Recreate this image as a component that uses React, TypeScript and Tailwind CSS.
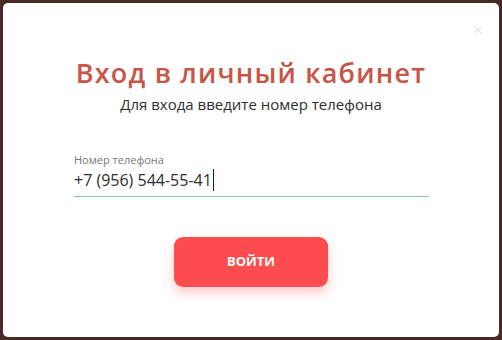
import { X } from "lucide-react";

export default function App() {
  return (
    <div className="w-[502px] h-[340px] bg-[#4a2a24] p-[3px] font-['Open_Sans',sans-serif]">
      <div className="relative h-full bg-white rounded-[5px] flex flex-col items-center">
        <button className="absolute top-[20px] right-[14px] text-[#d4d4d4]">
          <X size={14} strokeWidth={1.5} />
        </button>

        <h1 className="mt-[54px] text-[27px] leading-[32px] font-semibold text-[#c75548] tracking-[1.2px]">
          Вход в личный кабинет
        </h1>
        <p className="mt-[5px] text-[15px] leading-[20px] font-medium text-[#2e2e2e]">
          Для входа введите номер телефона
        </p>

        <div className="mt-[39px] w-[355px] self-start ml-[71px]">
          <label className="block text-[11px] leading-[14px] text-[#777]">Номер телефона</label>
          <div className="mt-[2px] pb-[5px] border-b border-[#8ec5a2] flex items-center">
            <span className="text-[16px] leading-[22px] font-medium text-[#2e2e2e]">+7 (956) 544-55-41</span>
            <span className="ml-[1px] w-px h-[22px] bg-[#222]" />
          </div>
        </div>

        <button className="mt-[40px] w-[154px] h-[50px] rounded-[9px] bg-[#fd4d4f] text-white text-[13px] font-bold shadow-[0_6px_12px_rgba(253,77,79,0.3)]">
          ВОЙТИ
        </button>
      </div>
    </div>
  );
}
